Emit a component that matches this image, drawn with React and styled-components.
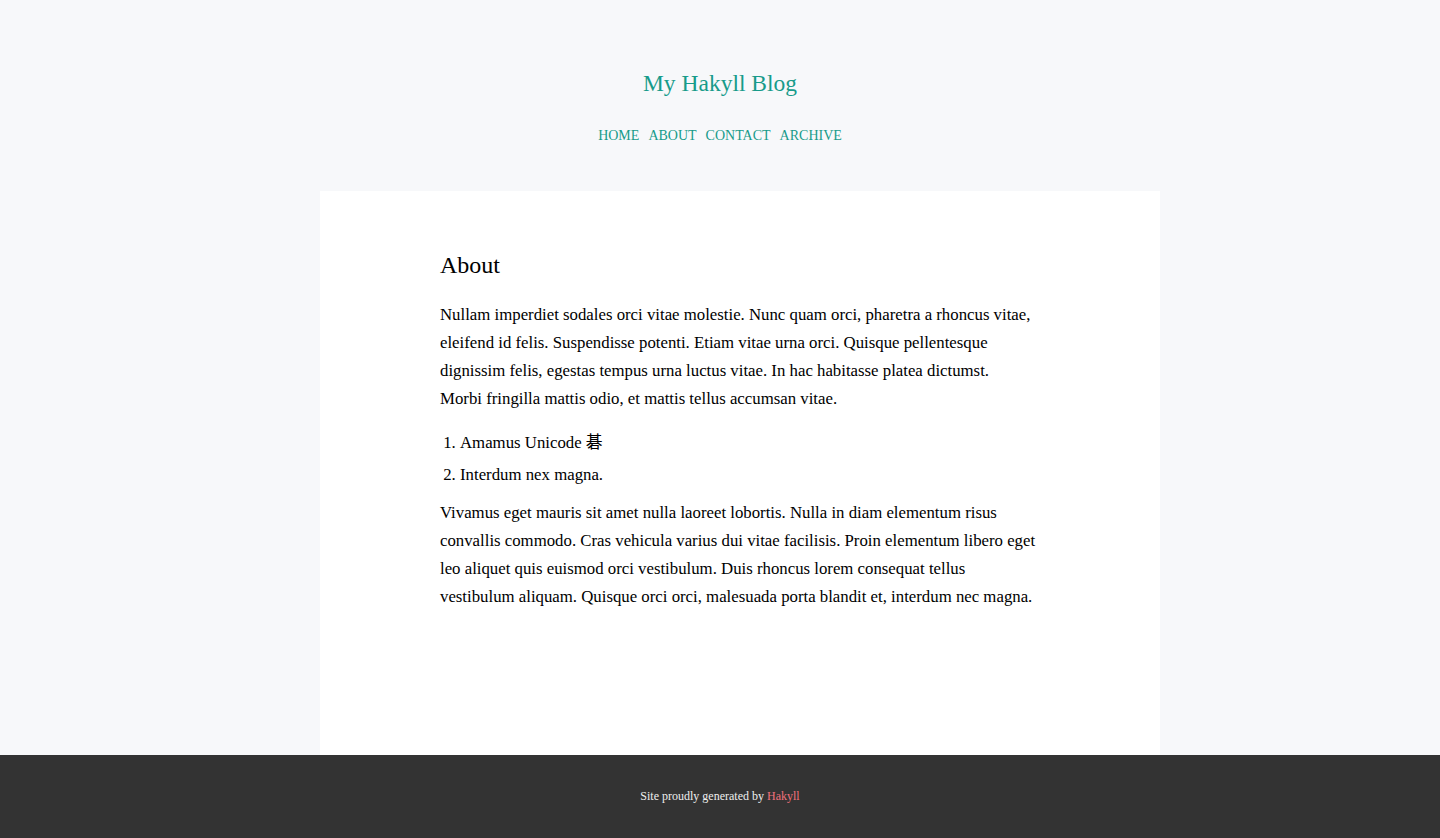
import React from "react";
import styled, { createGlobalStyle } from "styled-components";

const Global = createGlobalStyle`
  html, body { margin: 0; padding: 0; }
  body {
    background: #f7f8fa;
    font-family: "Liberation Serif", "Noto Sans CJK SC", serif;
    color: #000;
  }
`;

const Page = styled.div`
  display: flex;
  flex-direction: column;
  min-height: 838px;
`;

const Header = styled.header`
  height: 191px;
  box-sizing: border-box;
  padding-top: 67px;
  display: flex;
  flex-direction: column;
  align-items: center;
`;

const Title = styled.a`
  font-size: 23.5px;
  line-height: 32px;
  color: #179b8a;
  text-decoration: none;
`;

const Nav = styled.nav`
  margin-top: 27px;
  display: flex;
  gap: 9px;
`;

const NavLink = styled.a`
  font-size: 14px;
  line-height: 20px;
  color: #179b8a;
  text-decoration: none;
  text-transform: uppercase;
`;

const Main = styled.main`
  width: 840px;
  height: 564px;
  box-sizing: border-box;
  margin-left: calc(50% - 400px);
  background: #fff;
  padding: 58px 120px;
`;

const Heading = styled.h1`
  margin: 0 0 20px;
  font-size: 24px;
  line-height: 32px;
  font-weight: normal;
`;

const Para = styled.p`
  margin: 0;
  font-size: 16.8px;
  line-height: 28px;
  width: 620px;
`;

const List = styled.ol`
  margin: 16px 0 10px;
  padding-left: 20px;
`;

const Item = styled.li`
  font-size: 16.8px;
  line-height: 28px;
  margin-bottom: 4px;
`;

const Footer = styled.footer`
  background: #333;
  height: 83px;
  display: flex;
  align-items: center;
  justify-content: center;
  font-size: 12px;
  color: #eee;
`;

const FooterLink = styled.a`
  color: #f0717b;
  text-decoration: none;
  margin-left: 3px;
`;

export default function App() {
  return (
    <Page>
      <Global />
      <Header>
        <Title href="#">My Hakyll Blog</Title>
        <Nav>
          <NavLink href="#">Home</NavLink>
          <NavLink href="#">About</NavLink>
          <NavLink href="#">Contact</NavLink>
          <NavLink href="#">Archive</NavLink>
        </Nav>
      </Header>
      <Main>
        <Heading>About</Heading>
        <Para>
          Nullam imperdiet sodales orci vitae molestie. Nunc quam orci, pharetra a rhoncus vitae,
          <br />
          eleifend id felis. Suspendisse potenti. Etiam vitae urna orci. Quisque pellentesque
          <br />
          dignissim felis, egestas tempus urna luctus vitae. In hac habitasse platea dictumst.
          <br />
          Morbi fringilla mattis odio, et mattis tellus accumsan vitae.
        </Para>
        <List>
          <Item>Amamus Unicode 碁</Item>
          <Item>Interdum nex magna.</Item>
        </List>
        <Para>
          Vivamus eget mauris sit amet nulla laoreet lobortis. Nulla in diam elementum risus
          <br />
          convallis commodo. Cras vehicula varius dui vitae facilisis. Proin elementum libero eget
          <br />
          leo aliquet quis euismod orci vestibulum. Duis rhoncus lorem consequat tellus
          <br />
          vestibulum aliquam. Quisque orci orci, malesuada porta blandit et, interdum nec magna.
        </Para>
      </Main>
      <Footer>
        Site proudly generated by<FooterLink href="#">Hakyll</FooterLink>
      </Footer>
    </Page>
  );
}
